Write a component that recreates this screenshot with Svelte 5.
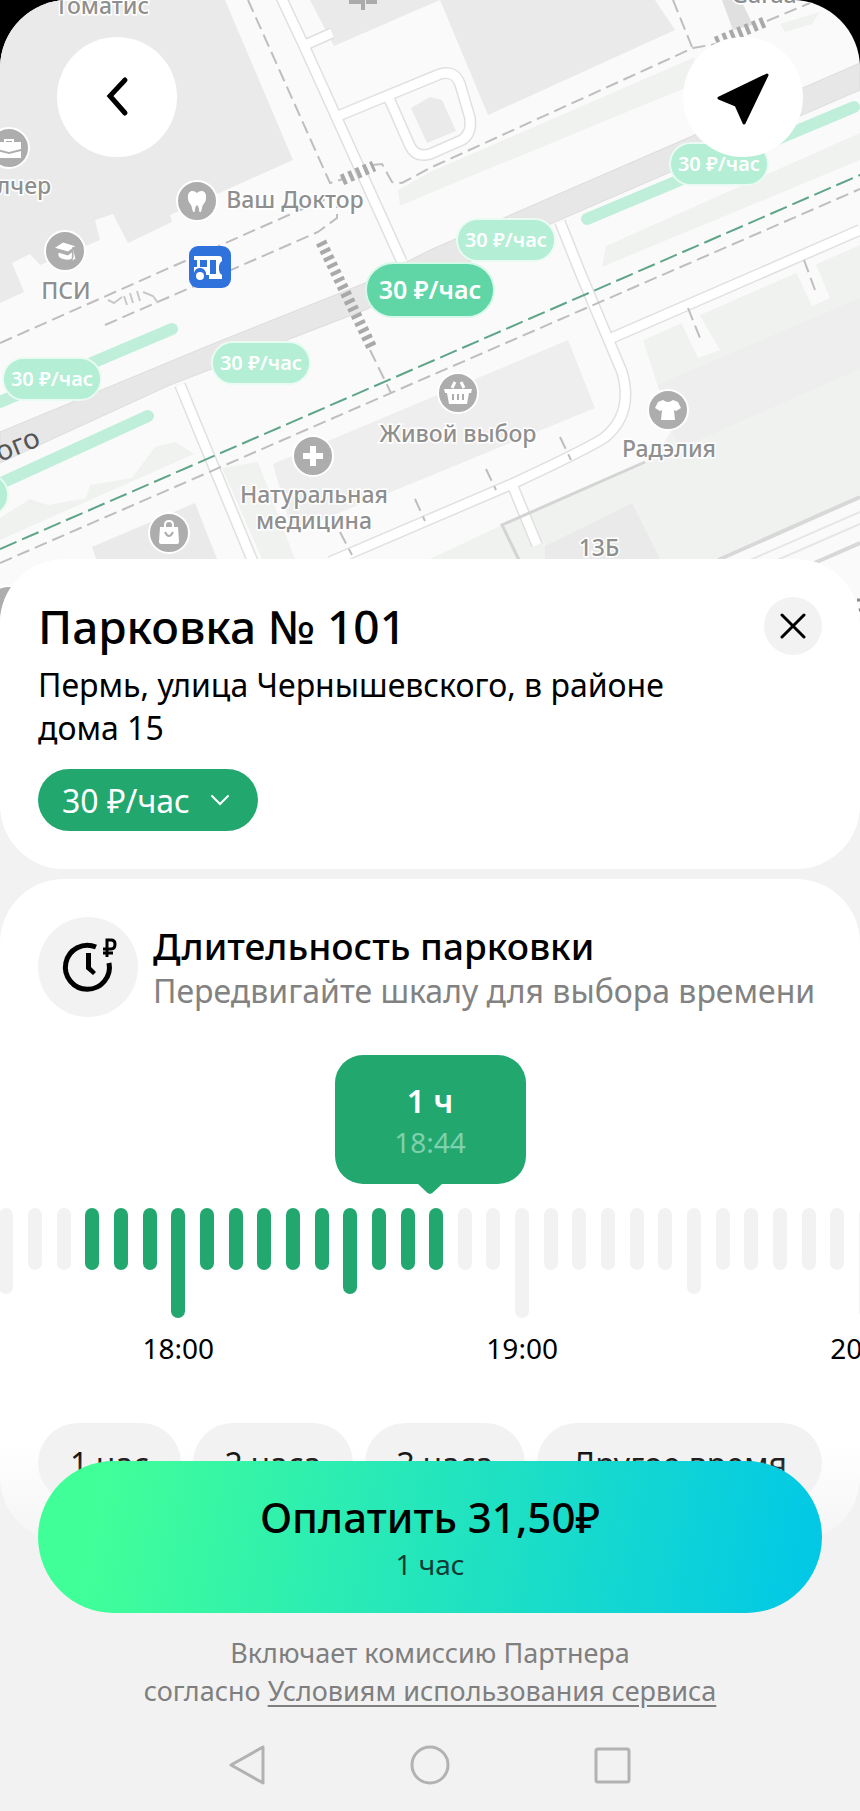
<script>
  const START_TICK = 3;
  const TICKS_PER_HOUR = 12;
  const names = { 1: '1 час', 2: '2 часа', 3: '3 часа' };

  let hours = $state(1);
  let total = $derived((31.5 * hours).toFixed(2).replace('.', ','));

  // one tick is 5 minutes, the first one is 17:30
  const ticks = Array.from({ length: 31 }, (_, i) => ({
    size: i % 12 === 6 ? 'long' : i % 6 === 0 ? 'mid' : 'short',
    label: { 6: '18:00', 18: '19:00', 30: '20:00' }[i]
  }));

  const prices = [
    { x: 506, y: 240 },
    { x: 719, y: 164 },
    { x: 52, y: 379 },
    { x: 261, y: 363 },
    { x: -41, y: 495 }
  ];

  const places = [
    { x: 9, y: 148, icon: 'case' },
    { x: 197, y: 201, icon: 'tooth' },
    { x: 65, y: 251, icon: 'hat' },
    { x: 458, y: 393, icon: 'basket' },
    { x: 668, y: 410, icon: 'shirt' },
    { x: 313, y: 456, icon: 'cross' },
    { x: 169, y: 533, icon: 'bag' },
    { x: 8, y: 606, icon: '' }
  ];

  const labels = [
    { x: 102, y: 14, text: 'Томатис' },
    { x: 17, y: 194, text: 'олчер' },
    { x: 295, y: 208, text: 'Ваш Доктор' },
    { x: 66, y: 299, text: 'ПСИ' },
    { x: 458, y: 442, text: 'Живой выбор' },
    { x: 669, y: 457, text: 'Радэлия' },
    { x: 314, y: 503, text: 'Натуральная' },
    { x: 314, y: 529, text: 'медицина' },
    { x: 599, y: 556, text: '13Б' },
    { x: 764, y: 3, text: 'Garaa' }
  ];
</script>

<main class="screen">
  <header class="map">
    <svg class="map-canvas" viewBox="0 0 860 640" preserveAspectRatio="xMidYMin slice">
      <rect width="860" height="640" fill="#fbfafb" />

      <!-- lawns -->
      <g fill="#eff2ef">
        <path d="M398 190L430 172L695 57L690 86L430 193L400 206Z" />
        <path d="M606 246L860 133V160L602 267Z" />
        <path d="M780 24L820 12L812 24L785 32Z" />
        <path d="M0 518L30 499L48 505L86 498L90 485L132 478L155 447L175 442L194 454L0 540Z" />
        <path d="M222 468L258 462L295 559H262Z" />
        <path d="M632 345L860 245V495L715 559H430L502 525L545 505L655 457Z" />
      </g>

      <!-- buildings -->
      <g fill="#eaeaea">
        <path d="M0 0H225L293 160L170 215L172 222L128 243L113 214L95 220L100 240L40 265L30 254L12 263L24 292L0 303Z" />
        <path d="M310 0L334 46L440 0Z" />
        <path d="M440 0L488 115L675 30L655 0Z" />
        <path d="M411 108L430 97L442 100L456 131L427 143Z" />
        <path d="M722 0L733 30L753 25L741 0Z" fill="#e0e0e0" />
        <path d="M273 464L568 340L595 408L430 476L292 532Z" fill="#eeeeee" />
        <path d="M92 547L195 503L217 559H96Z" />
        <path d="M545 546L632 503L660 559H545Z" />
        <path d="M650 388L860 298V369L680 448Z" fill="#eeeeee" />
      </g>
      <g fill="#fbfafb">
        <path d="M680 320L698 312L720 350L698 358Z" />
        <path d="M795 270L815 262L830 298L812 306Z" />
        <path d="M632 345L643 340L672 430L655 457L632 440Z" />
        <path d="M802 606L860 576V640H790Z" />
        <path d="M718 562L860 499V545L820 562Z" />
      </g>

      <!-- side roads, edge colour first and white on top -->
      <g fill="none" stroke="#e0e0e0" stroke-width="12">
        <path d="M280 -5L305 48L402 262" />
        <path d="M305 45L332 33M338 116L440 74Q455 70 460 84L470 118Q472 134 462 140L430 154Q416 158 410 146L388 96" />
        <path d="M180 385L253 562" />
        <path d="M560 222L580 272L622 372Q634 414 604 438Q585 450 512 484L330 562M512 484L537 545" />
        <path d="M607 340L860 230" />
      </g>
      <g fill="none" stroke="#fff" stroke-width="9">
        <path d="M280 -5L305 48L402 262" />
        <path d="M305 45L332 33M338 116L440 74Q455 70 460 84L470 118Q472 134 462 140L430 154Q416 158 410 146L388 96" />
        <path d="M180 385L253 562" />
        <path d="M560 222L580 272L622 372Q634 414 604 438Q585 450 512 484L330 562M512 484L537 545" />
        <path d="M607 340L860 230" />
      </g>

      <!-- main avenue -->
      <path d="M0 432L215 343L365 283L430 250L515 213L690 137L860 63V90L555 222L365 310L170 385L0 463Z" fill="#e8e7e8" stroke="#dddcdd" />

      <path d="M645 462L502 525L519 560" fill="none" stroke="#d4d4d4" stroke-width="3" />
      <path d="M860 497L718 560M860 543L812 564" fill="none" stroke="#d8d8d8" stroke-width="4" />
      <path d="M860 512L750 560M860 524L775 561" fill="none" stroke="#e6e6e6" stroke-width="2" />

      <!-- footpaths -->
      <g fill="none" stroke="#bfbdbe" stroke-width="2" stroke-dasharray="13 6">
        <path d="M248 0L330 183L343 179M372 165L382 164L392 182L402 183L430 168L693 48L716 44" />
        <path d="M767 21L810 3M673 0L692 47" />
        <path d="M0 343L300 210L333 196" />
        <path d="M105 325L318 232L337 218V205" />
        <path d="M370 350L391 393" />
        <path d="M0 563L430 376L860 189" />
        <path d="M688 308L700 338M804 260L815 290M560 437L571 460M486 469L496 490M415 499L425 521M340 532L352 555" />
      </g>
      <path d="M108 300L114 303L122 297M124 296L127 305M130 293L133 303M137 291L140 301M143 292L153 296L158 303" fill="none" stroke="#c9c9c9" stroke-width="2" />
      <g fill="none" stroke="#aaa9aa" stroke-width="11" stroke-dasharray="4 4">
        <path d="M321 242L373 350" />
        <path d="M342 180L374 166" />
        <path d="M716 42L767 21" />
      </g>
      <path d="M0 549L860 175" fill="none" stroke="#5fa587" stroke-width="2" stroke-dasharray="18 6" />

      <!-- paid parking -->
      <g fill="none" stroke="#bfefda" stroke-width="12" stroke-linecap="round">
        <path d="M587 219L854 107" />
        <path d="M-5 404L172 329" />
        <path d="M-5 486L148 416" />
      </g>

      <path d="M349 2H359V0M377 2H368V0M363 -2V10" fill="none" stroke="#aaa" stroke-width="4" />

      {#each places as place}
        <g transform="translate({place.x} {place.y})">
          <circle r="20" fill="#adadad" stroke="#fff" stroke-width="2" />
          {#if place.icon === 'case'}
            <path d="M-12 -6H12V1L0 4L-12 1ZM-12 3L0 6L12 3V10H-12ZM-5 -6V-9H5V-6H3V-7H-3V-6Z" fill="#fff" />
          {:else if place.icon === 'tooth'}
            <path d="M0 -8C-4 -12 -10 -10 -9 -3C-9 2 -6 2 -5 7C-4 13 -2 12 -2 8C-1 3 1 3 2 8C2 12 4 13 5 7C6 2 9 2 9 -3C10 -10 4 -12 0 -8Z" fill="#fff" />
          {:else if place.icon === 'hat'}
            <path d="M-11 -3L-2 -9L11 -5L3 1ZM-7 1L3 4L8 0V7C5 11 -5 9 -7 5ZM8 -4L11 8L7 10Z" fill="#fff" stroke="#adadad" stroke-width="1" />
          {:else if place.icon === 'basket'}
            <path d="M-14 -4H14L13 0H11L9 11H-9L-11 0H-13Z" fill="#fff" />
            <path d="M-6 -5L-3 -11M6 -5L3 -11" stroke="#fff" stroke-width="3" />
            <path d="M-5 1V7M0 1V7M5 1V7" stroke="#adadad" stroke-width="2" />
          {:else if place.icon === 'shirt'}
            <path d="M-5 -10Q0 -6 5 -10L10 -8L13 -2L8 1L6 0L7 10H-7L-6 0L-8 1L-13 -2L-10 -8Z" fill="#fff" />
          {:else if place.icon === 'cross'}
            <path d="M-3 -10H3V-3H10V3H3V10H-3V3H-10V-3H-3Z" fill="#fff" />
          {:else if place.icon === 'bag'}
            <path d="M-9 -6H9L10 9Q10 11 8 11H-8Q-10 11 -10 9Z" fill="#fff" />
            <path d="M-4 -6V-8Q-4 -12 0 -12Q4 -12 4 -8V-6" fill="none" stroke="#fff" stroke-width="2" />
            <path d="M-4 -1Q0 7 4 -1" fill="none" stroke="#adadad" stroke-width="2" />
          {/if}
        </g>
      {/each}

      <!-- bus terminal -->
      <g transform="translate(189 246)">
        <rect width="42" height="42" rx="9" fill="#3072dc" />
        <path d="M5 10H30Q33 10 33 13V15Q30 17 30 20V24Q30 27 33 29V33H20V29H17A6 6 0 0 0 5 27V21H8V14H5ZM11 14V21H18V14ZM21 14V28H27V14Z" fill="#fff" fill-rule="evenodd" />
        <circle cx="11" cy="30" r="5" fill="#fff" stroke="#3072dc" stroke-width="2" />
      </g>

      {#each labels as label}
        <text class="map-label" x={label.x} y={label.y}>{label.text}</text>
      {/each}
      <text class="street" x="0" y="462" transform="rotate(-22 0 462)">ого</text>
      <path d="M857 600H864M858 610H864M857 620H864" stroke="#888" stroke-width="3" />

      {#each prices as price}
        <g transform="translate({price.x} {price.y})">
          <rect x="-49" y="-21" width="98" height="42" rx="21" fill="#b3eed5" stroke="#e9fbf3" stroke-width="2" />
          <text class="price" y="7">30 ₽/час</text>
        </g>
      {/each}
      <g transform="translate(430 290)">
        <rect x="-64" y="-27" width="128" height="54" rx="27" fill="#60d5a5" stroke="#d8f8ea" stroke-width="2" />
        <text class="price price-big" y="9">30 ₽/час</text>
      </g>
    </svg>

    <div class="map-controls">
      <button class="round" aria-label="Назад">
        <svg width="60" height="60" viewBox="0 0 60 60">
          <path d="M38 13L23 29L38 46" fill="none" stroke="#000" stroke-width="5" stroke-linecap="round" />
        </svg>
      </button>
      <button class="round" aria-label="Моё местоположение">
        <svg width="60" height="60" viewBox="0 0 60 60">
          <path d="M54 8L6 31L23 38L31 56Z" fill="#000" stroke="#000" stroke-width="3" stroke-linejoin="round" />
        </svg>
      </button>
    </div>
  </header>

  <div class="sheet">
    <section class="card">
      <div class="title-row">
        <h1>Парковка № 101</h1>
        <button class="close" aria-label="Закрыть">
          <svg width="26" height="26" viewBox="0 0 26 26">
            <path d="M2 2L24 24M24 2L2 24" stroke="#000" stroke-width="3" stroke-linecap="round" />
          </svg>
        </button>
      </div>
      <p class="address">Пермь, улица Чернышевского, в районе дома 15</p>
      <button class="tariff">
        30 ₽/час
        <svg width="20" height="12" viewBox="0 0 20 12">
          <path d="M2 2L10 10L18 2" fill="none" stroke="#fff" stroke-width="2" stroke-linecap="round" />
        </svg>
      </button>
    </section>

    <section class="card duration">
      <div class="duration-head">
        <span class="clock">
          <svg width="60" height="60" viewBox="0 0 60 60">
            <path d="M38 10A22 22 0 1 0 51 26" fill="none" stroke="#000" stroke-width="5" />
            <path d="M28 16H33V30L38 35L35 38L28 32Z" fill="#000" />
            <path d="M49 20V3H53Q57 3 57 7Q57 12 53 12H45M45 16H55" fill="none" stroke="#000" stroke-width="3" />
          </svg>
        </span>
        <div>
          <h2>Длительность парковки</h2>
          <p class="hint">Передвигайте шкалу для выбора времени</p>
        </div>
      </div>

      <div class="bubble">
        <strong>{hours} ч</strong>
        <span>{17 + hours}:44</span>
      </div>

      <div class="ruler">
        <div class="ticks">
          {#each ticks as tick, i}
            <div class="tick">
              <i
                class="bar {tick.size}"
                class:active={i >= START_TICK && i <= START_TICK + hours * TICKS_PER_HOUR}
              ></i>
              {#if tick.label}<span>{tick.label}</span>{/if}
            </div>
          {/each}
        </div>
        <input type="range" min="1" max="3" bind:value={hours} aria-label="Длительность парковки" />
      </div>

      <div class="chips">
        {#each [1, 2, 3] as n}
          <button class="chip" onclick={() => (hours = n)}>{names[n]}</button>
        {/each}
        <button class="chip">Другое время</button>
      </div>
    </section>

    <footer class="footer">
      <button class="pay">
        <strong>Оплатить {total}₽</strong>
        <span>{names[hours]}</span>
      </button>
      <p class="terms">
        Включает комиссию Партнера<br />
        согласно <a href="#terms">Условиям использования сервиса</a>
      </p>
      <nav class="system-nav">
        <button aria-label="Назад">
          <svg width="40" height="40" viewBox="0 0 40 40"><path d="M35 2V38L3 20Z" /></svg>
        </button>
        <button aria-label="Домой">
          <svg width="40" height="40" viewBox="0 0 40 40"><circle cx="20" cy="20" r="18" /></svg>
        </button>
        <button aria-label="Недавние">
          <svg width="40" height="40" viewBox="0 0 40 40"><rect x="4" y="4" width="33" height="33" rx="2" /></svg>
        </button>
      </nav>
    </footer>
  </div>
</main>

<style>
  :global(body) {
    background: #f2f2f2;
  }

  .screen {
    font-family: 'Noto Sans', sans-serif;
    color: #000;
    background: #000;
    overflow: hidden;
  }

  h1, h2, p {
    margin: 0;
    font-weight: 500;
  }

  button {
    font: inherit;
    color: inherit;
    border: none;
    padding: 0;
    cursor: pointer;
  }

  svg {
    display: block;
  }

  .map {
    position: relative;
    height: 640px;
    border-radius: 68px 68px 0 0;
    overflow: hidden;
  }

  .map-canvas {
    position: absolute;
    width: 100%;
    height: 100%;
  }

  .map-label {
    font-size: 23px;
    font-weight: 500;
    text-anchor: middle;
    fill: #8f8f8f;
    stroke: #fff;
    stroke-width: 3px;
    paint-order: stroke;
  }

  .street {
    font-size: 28px;
    fill: #555;
  }

  .price {
    font-size: 20px;
    font-weight: 600;
    text-anchor: middle;
    fill: #fff;
  }

  .price-big {
    font-size: 25px;
  }

  .map-controls {
    position: relative;
    display: flex;
    justify-content: space-between;
    padding: 37px 57px;
  }

  .round {
    display: grid;
    place-items: center;
    width: 120px;
    height: 120px;
    border-radius: 50%;
    background: #fff;
  }

  .sheet {
    position: relative;
    display: grid;
    gap: 10px;
    margin-top: -81px;
    border-radius: 64px 64px 0 0;
    background: #f2f2f2;
  }

  .card {
    padding: 38px;
    border-radius: 64px;
    background: #fff;
    min-width: 0;
  }

  .title-row {
    display: flex;
    align-items: center;
    justify-content: space-between;
  }

  h1 {
    font-size: 46px;
    line-height: 56px;
  }

  .close {
    display: grid;
    place-items: center;
    width: 58px;
    height: 58px;
    border-radius: 50%;
    background: #f2f2f2;
  }

  .address {
    max-width: 660px;
    margin-top: 8px;
    font-size: 32px;
    line-height: 43px;
    font-weight: 400;
  }

  .tariff {
    display: flex;
    align-items: center;
    gap: 20px;
    height: 62px;
    margin-top: 20px;
    padding: 0 28px 0 24px;
    border-radius: 31px;
    background: #22a86f;
    color: #fff;
    font-size: 32px;
  }

  .duration {
    display: grid;
  }

  .duration-head {
    display: flex;
    align-items: center;
    gap: 15px;
    height: 100px;
  }

  .clock {
    display: grid;
    place-items: center;
    flex: none;
    width: 100px;
    height: 100px;
    border-radius: 50%;
    background: #f2f2f2;
  }

  h2 {
    font-size: 37px;
    line-height: 46px;
  }

  .hint {
    font-size: 32px;
    line-height: 43px;
    font-weight: 400;
    color: #828282;
    white-space: nowrap;
  }

  .bubble {
    position: relative;
    display: grid;
    align-content: center;
    justify-items: center;
    justify-self: center;
    width: 191px;
    height: 129px;
    margin-top: 38px;
    border-radius: 28px;
    background: #22a86f;
    color: #fff;
  }

  .bubble::after {
    content: '';
    position: absolute;
    top: 100%;
    left: 50%;
    width: 24px;
    height: 10px;
    transform: translateX(-50%);
    background: #22a86f;
    clip-path: polygon(0 0, 100% 0, 60% 90%, 50% 100%, 40% 90%);
  }

  .bubble strong {
    font-size: 32px;
    line-height: 44px;
    font-weight: 600;
  }

  .bubble span {
    font-size: 28px;
    line-height: 38px;
    color: #7fd0ac;
  }

  .ruler {
    position: relative;
    margin: 24px -38px 0;
    overflow: hidden;
  }

  .ruler input {
    position: absolute;
    inset: 0;
    width: 100%;
    margin: 0;
    opacity: 0;
  }

  .ticks {
    display: grid;
    grid-auto-flow: column;
    grid-auto-columns: calc(100% / 30);
    margin-left: -8px;
    margin-right: 8px;
  }

  .tick {
    display: grid;
    grid-template-rows: 118px 44px;
    justify-items: center;
    justify-content: center;
  }

  .tick span {
    width: 80px;
    margin: 0 -33px;
    font-size: 28px;
    line-height: 44px;
    text-align: center;
  }

  .bar {
    width: 14px;
    height: 62px;
    border-radius: 7px;
    background: #f2f2f2;
  }

  .bar.mid {
    height: 86px;
  }

  .bar.long {
    height: 110px;
  }

  .bar.active {
    background: #22a86f;
  }

  .chips {
    display: grid;
    grid-template-columns: 143fr 160fr 160fr 285fr;
    gap: 12px;
    margin-top: 53px;
  }

  .chip {
    height: 80px;
    border-radius: 41px;
    background: #f2f2f2;
    font-size: 32px;
    white-space: nowrap;
  }

  .footer {
    position: relative;
    display: grid;
    margin-top: -128px;
    padding: 38px 38px 26px;
    background: linear-gradient(rgba(242, 242, 242, 0) 20px, #f2f2f2 140px);
  }

  .pay {
    display: grid;
    align-content: center;
    justify-items: center;
    height: 152px;
    border-radius: 76px;
    background: linear-gradient(100deg, #41ff98 8%, #02c8e6 98%);
  }

  .pay strong {
    font-size: 42px;
    line-height: 54px;
    font-weight: 500;
  }

  .pay span {
    font-size: 28px;
    line-height: 40px;
    color: #0d3b35;
  }

  .terms {
    margin-top: 21px;
    font-size: 27px;
    line-height: 38px;
    font-weight: 400;
    color: #7f7f7f;
    text-align: center;
  }

  .terms a {
    color: inherit;
    text-underline-offset: 4px;
  }

  .system-nav {
    display: flex;
    justify-content: center;
    gap: 142px;
    margin-top: 35px;
  }

  .system-nav button {
    background: none;
  }

  .system-nav svg {
    fill: none;
    stroke: #b2b2b2;
    stroke-width: 3;
    stroke-linejoin: round;
  }
</style>
